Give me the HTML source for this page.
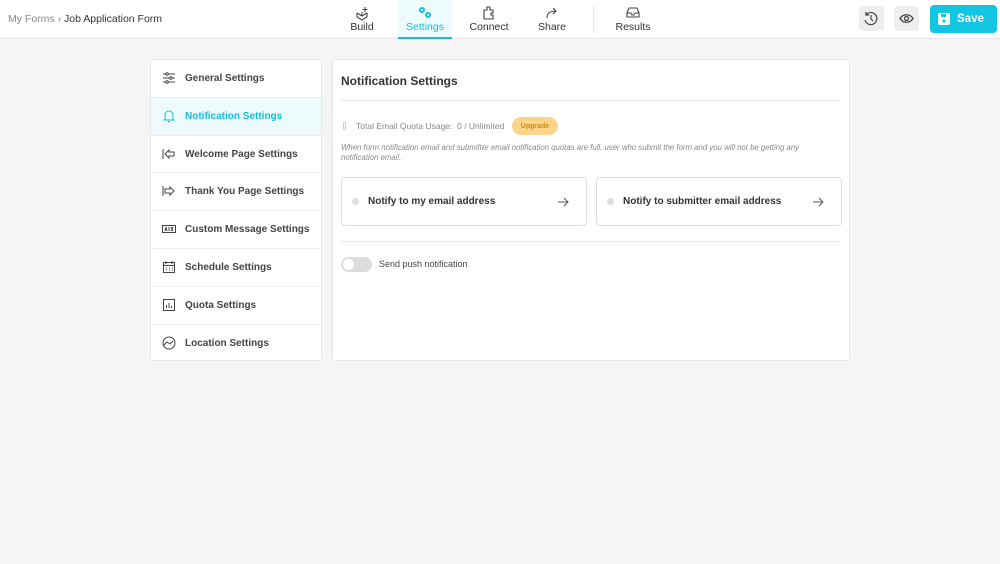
<!DOCTYPE html><html><head><style>
*{box-sizing:border-box;margin:0;padding:0}
body{width:1000px;height:564px;background:#f5f5f5;font-family:"Liberation Sans",sans-serif;color:#333;position:relative;overflow:hidden}
.top{position:absolute;left:0;top:0;width:1000px;height:39px;background:#fff;border-bottom:1px solid #e6e6e6}
.bc{position:absolute;left:8px;top:13px;font-size:10.5px;color:#888}
.bc b{font-weight:normal;color:#333}
.tab{position:absolute;top:0;height:39px;text-align:center;font-size:10.5px;color:#333}
.tab svg{position:absolute;top:5px;left:50%;margin-left:-8px}
.tab span{position:absolute;top:21px;left:0;right:0}
.act{background:#eefbfd;color:#12bfdf;border-bottom:2px solid #12bfdf}
.ib{position:absolute;top:6px;width:25px;height:25px;border-radius:4px;background:#eee}
.save{position:absolute;left:930px;top:5px;width:67px;height:28px;background:#12c5e3;border-radius:4px;color:#fff;font-weight:bold;font-size:11.5px}
.side{position:absolute;left:150px;top:59px;width:172px;height:302px;background:#fff;border:1px solid #e6e6e6;border-radius:3px}
.row{height:37.8px;border-bottom:1px solid #eee;position:relative;font-size:10px;font-weight:bold;color:#444}
.row:last-child{border-bottom:none}
.row span{position:absolute;left:34px;top:13px}
.row svg{position:absolute;left:11px;top:11px}
.row.on{background:#eefbfd;color:#12bfdf}
.main{position:absolute;left:332px;top:59px;width:518px;height:302px;background:#fff;border:1px solid #e6e6e6;border-radius:3px}
.card{position:absolute;top:117px;width:246px;height:49px;border:1px solid #ddd;border-radius:4px;font-size:10px;font-weight:bold;color:#333}
.card i{position:absolute;left:10px;top:20px;width:7px;height:7px;border-radius:50%;background:#ddd}
.card span{position:absolute;left:26px;top:18px}
.card svg{position:absolute;right:17px;top:19px}
</style></head><body>
<div class="top">
<div class="bc">My Forms › <b>Job Application Form</b></div>
<div class="tab" style="left:340px;width:44px"><svg width="16" height="16" viewBox="0 0 16 16" fill="none" stroke="#444" stroke-width="1.1"><path d="M3 8l5 3 5-3M3 8v4l5 3 5-3V8M8 11V7M11 2v5M8.5 4.5h5"/></svg><span>Build</span></div>
<div class="tab act" style="left:398px;width:54px"><svg width="16" height="16" viewBox="0 0 16 16" fill="#12bfdf"><circle cx="5" cy="5" r="3"/><circle cx="11" cy="10" r="3"/><circle cx="5" cy="5" r="1" fill="#fff"/><circle cx="11" cy="10" r="1" fill="#fff"/></svg><span>Settings</span></div>
<div class="tab" style="left:466px;width:46px"><svg width="16" height="16" viewBox="0 0 16 16" fill="none" stroke="#444" stroke-width="1.1"><path d="M3 5h3V2h3v3h3v3h-2v2h2v4H3z"/></svg><span>Connect</span></div>
<div class="tab" style="left:532px;width:40px"><svg width="16" height="16" viewBox="0 0 16 16" fill="none" stroke="#444" stroke-width="1.1"><path d="M3 13c0-5 3-7 9-7M9 3l3 3-3 3"/></svg><span>Share</span></div>
<div style="position:absolute;left:593px;top:6px;width:1px;height:27px;background:#e6e6e6"></div>
<div class="tab" style="left:610px;width:46px"><svg width="16" height="16" viewBox="0 0 16 16" fill="none" stroke="#444" stroke-width="1.1"><path d="M2 8l2-5h8l2 5v4H2zM2 8h4l1 2h2l1-2h4"/></svg><span>Results</span></div>
<div class="ib" style="left:859px"><svg width="25" height="25" viewBox="0 0 25 25" fill="none" stroke="#444" stroke-width="1.2"><path d="M7 9a6 6 0 1 1-1 5M7 6v3h3M12 9v4l2 2"/></svg></div>
<div class="ib" style="left:894px"><svg width="25" height="25" viewBox="0 0 25 25" fill="none" stroke="#444" stroke-width="1.3"><path d="M6 12.5c3-5 10-5 13 0-3 5-10 5-13 0z"/><circle cx="12.5" cy="12.5" r="2"/></svg></div>
<div class="save"><svg style="position:absolute;left:8px;top:8px" width="12" height="12" viewBox="0 0 12 12"><rect width="12" height="12" rx="2" fill="#fff"/><rect x="3" y="1" width="5" height="3" fill="#12c5e3"/><circle cx="6" cy="8" r="1.6" fill="#12c5e3"/></svg><span style="position:absolute;left:27px;top:8px">Save</span></div>
</div>
<div class="side">
<div class="row"><svg width="14" height="14" viewBox="0 0 14 14" fill="none" stroke="#444"><path d="M1 3h12M1 7h12M1 11h12"/><circle cx="5" cy="3" r="1.3" fill="#fff"/><circle cx="9" cy="7" r="1.3" fill="#fff"/><circle cx="5" cy="11" r="1.3" fill="#fff"/></svg><span>General Settings</span></div>
<div class="row on"><svg width="14" height="14" viewBox="0 0 14 14" fill="none" stroke="#12bfdf"><path d="M3 10V6a4 4 0 0 1 8 0v4l1 1H2zM6 12.5h2"/></svg><span>Notification Settings</span></div>
<div class="row"><svg width="14" height="14" viewBox="0 0 14 14" fill="none" stroke="#444"><path d="M1 2v10M3 7l4-4v2h5v4H7v2z"/></svg><span>Welcome Page Settings</span></div>
<div class="row"><svg width="14" height="14" viewBox="0 0 14 14" fill="none" stroke="#444"><path d="M1 2v10M3 5h5V3l4 4-4 4V9H3z"/></svg><span>Thank You Page Settings</span></div>
<div class="row"><svg width="14" height="14" viewBox="0 0 14 14" fill="none" stroke="#444"><rect x="0.5" y="3.5" width="13" height="7"/><path d="M3 9l1-4 1 4M7 5v4M9 5l2 4M11 5l-2 4"/></svg><span>Custom Message Settings</span></div>
<div class="row"><svg width="14" height="14" viewBox="0 0 14 14" fill="none" stroke="#444"><rect x="1.5" y="2.5" width="11" height="10"/><path d="M1.5 5.5h11M4 1v3M10 1v3M4 8h1M7 8h1M10 8h1M4 10h1M7 10h1M10 10h1"/></svg><span>Schedule Settings</span></div>
<div class="row"><svg width="14" height="14" viewBox="0 0 14 14" fill="none" stroke="#444"><rect x="1.5" y="1.5" width="11" height="11"/><path d="M4.5 10V7M7 10V5M9.5 10V8"/></svg><span>Quota Settings</span></div>
<div class="row"><svg width="14" height="14" viewBox="0 0 14 14" fill="none" stroke="#444"><circle cx="7" cy="7" r="6"/><path d="M2 9l3-3 3 2 3-3"/></svg><span>Location Settings</span></div>
</div>
<div class="main">
<div style="position:absolute;left:8px;top:14px;font-size:12px;font-weight:bold;color:#333">Notification Settings</div>
<div style="position:absolute;left:8px;right:8px;top:40px;height:1px;background:#e6e6e6"></div>
<div style="position:absolute;left:10px;top:62px;width:3px;height:8px;border:1px solid #ccc;border-radius:1px"></div>
<div style="position:absolute;left:23px;top:61px;font-size:8.5px;color:#888">Total Email Quota Usage:&nbsp; 0 / Unlimited</div>
<div style="position:absolute;left:179px;top:57px;width:46px;height:18px;border-radius:9px;background:#fcd58a;color:#c98a1a;font-size:7px;font-weight:bold;display:flex;align-items:center;justify-content:center">Upgrade</div>
<div style="position:absolute;left:8px;top:83px;width:490px;font-size:7.8px;font-style:italic;color:#888;line-height:10px">When form notification email and submitter email notification quotas are full, user who submit the form and you will not be getting any notification email.</div>
<div class="card" style="left:8px"><i></i><span>Notify to my email address</span><svg width="11" height="10" viewBox="0 0 11 10" fill="none" stroke="#555" stroke-width="1"><path d="M0 5h10M6 1l4 4-4 4"/></svg></div>
<div class="card" style="left:263px"><i></i><span>Notify to submitter email address</span><svg width="11" height="10" viewBox="0 0 11 10" fill="none" stroke="#555" stroke-width="1"><path d="M0 5h10M6 1l4 4-4 4"/></svg></div>
<div style="position:absolute;left:8px;right:8px;top:181px;height:1px;background:#e6e6e6"></div>
<div style="position:absolute;left:8px;top:197px;width:31px;height:15px;border-radius:8px;background:#ddd"><div style="position:absolute;left:2px;top:2px;width:11px;height:11px;border-radius:50%;background:#fff"></div></div>
<div style="position:absolute;left:46px;top:199px;font-size:9px;color:#444">Send push notification</div>
</div>
</body></html>
